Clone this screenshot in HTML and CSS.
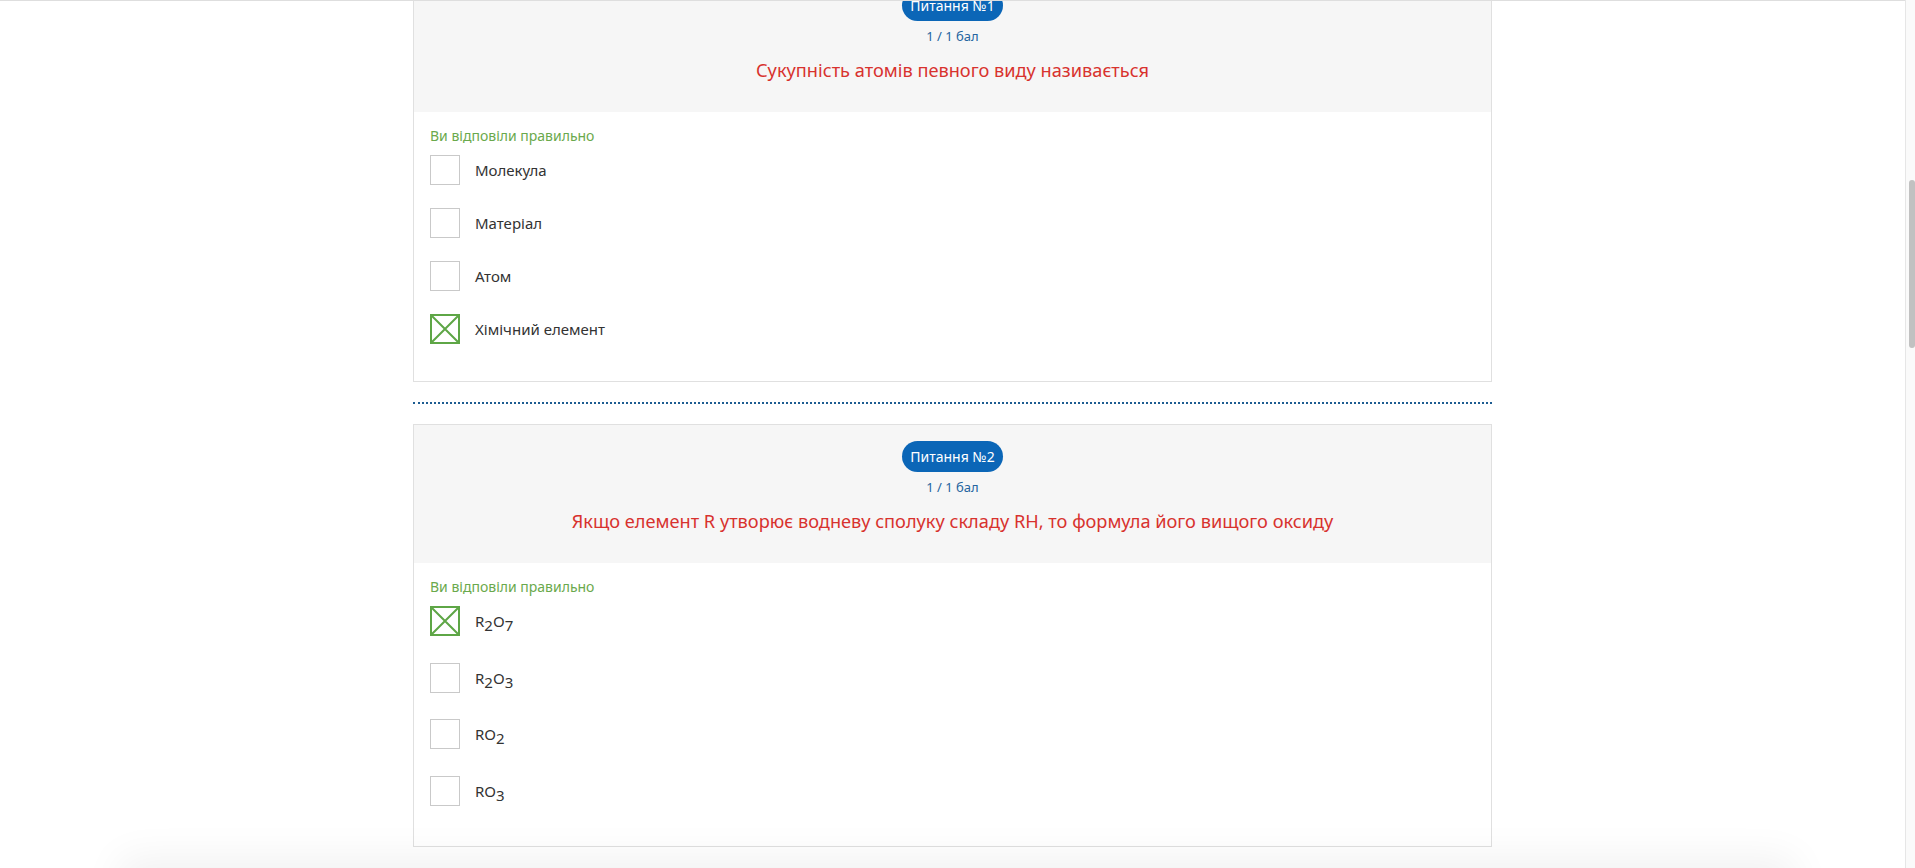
FILE: index.html
```html
<!DOCTYPE html>
<html lang="uk">
<head>
    <meta charset="UTF-8">
    <meta name="viewport" content="width=device-width, initial-scale=1.0">
    <title>Результати тесту</title>
    <link rel="stylesheet" href="styles.css">
</head>
<body>

<div class="topbar"></div>

<div class="page">
    <div class="viewport">
        <main class="quiz">

            <!-- Question 1 -->
            <section class="question">
                <div class="question-head">
                    <span class="badge">Питання №1</span>
                    <div class="score">1 / 1 бал</div>
                    <h2 class="question-title">Сукупність атомів певного виду називається</h2>
                </div>
                <div class="question-body">
                    <p class="result">Ви відповіли правильно</p>
                    <ul class="options">
                        <li class="option"><span class="box"></span><span class="option-text">Молекула</span></li>
                        <li class="option"><span class="box"></span><span class="option-text">Матеріал</span></li>
                        <li class="option"><span class="box"></span><span class="option-text">Атом</span></li>
                        <li class="option checked">
                            <span class="box">
                                <svg viewBox="0 0 26 26"><path d="M0 0L26 26M26 0L0 26"/></svg>
                            </span>
                            <span class="option-text">Хімічний елемент</span>
                        </li>
                    </ul>
                </div>
            </section>

            <hr class="divider">

            <!-- Question 2 -->
            <section class="question">
                <div class="question-head">
                    <span class="badge">Питання №2</span>
                    <div class="score">1 / 1 бал</div>
                    <h2 class="question-title">Якщо елемент R утворює водневу сполуку складу RH, то формула його вищого оксиду</h2>
                </div>
                <div class="question-body">
                    <p class="result">Ви відповіли правильно</p>
                    <ul class="options">
                        <li class="option checked">
                            <span class="box">
                                <svg viewBox="0 0 26 26"><path d="M0 0L26 26M26 0L0 26"/></svg>
                            </span>
                            <span class="option-text">R<sub>2</sub>O<sub>7</sub></span>
                        </li>
                        <li class="option"><span class="box"></span><span class="option-text">R<sub>2</sub>O<sub>3</sub></span></li>
                        <li class="option"><span class="box"></span><span class="option-text">RO<sub>2</sub></span></li>
                        <li class="option"><span class="box"></span><span class="option-text">RO<sub>3</sub></span></li>
                    </ul>
                </div>
            </section>

        </main>
    </div>

    <div class="scrollbar">
        <div class="thumb"></div>
    </div>
</div>

<div class="bottom-panel"></div>

</body>
</html>
```

FILE: styles.css
```css
* {
    margin: 0;
    padding: 0;
    box-sizing: border-box;
}

html, body {
    height: 100%;
    overflow: hidden;
}

body {
    font-family: 'Noto Sans', 'Open Sans', sans-serif;
    background-color: #fff;
    color: #333;
}

/* edge of the sticky site header */
.topbar {
    position: fixed;
    top: 0;
    left: 0;
    right: 10px;
    height: 1px;
    background-color: #dedede;
    z-index: 5;
}

.page {
    display: flex;
    height: 100vh;
}

.viewport {
    flex: 1;
    overflow: hidden;
}

.quiz {
    width: 1079px;
    margin: -27px auto 0;
}

/* ---------- question card ---------- */

.question {
    border: 1px solid #e0e0e0;
    background-color: #fff;
}

.question-head {
    background-color: #f6f6f6;
    padding: 16px 20px 29px;
    text-align: center;
}

.badge {
    display: inline-block;
    height: 31px;
    line-height: 31px;
    padding: 0 8px;
    border-radius: 16px;
    background-color: #0b66b7;
    color: #fff;
    font-size: 14px;
}

.score {
    margin-top: 5px;
    line-height: 20px;
    font-size: 13px;
    color: #2565a0;
}

.question-title {
    margin-top: 11px;
    line-height: 26px;
    font-size: 18.2px;
    font-weight: normal;
    color: #d8322e;
}

.question-body {
    padding: 13px 16px 37px;
}

.result {
    line-height: 22px;
    font-size: 14px;
    color: #6aa94c;
}

.options {
    list-style: none;
    margin-top: 8px;
    display: flex;
    flex-direction: column;
    gap: 23px;
}

.option {
    display: flex;
    align-items: flex-start;
    gap: 15px;
}

.box {
    flex: none;
    width: 30px;
    height: 30px;
    border: 1px solid #c9c9c9;
    background-color: #fff;
}

.option.checked .box {
    border: 2px solid #5ea646;
}

.box svg {
    display: block;
    width: 26px;
    height: 26px;
}

.box svg path {
    stroke: #5ea646;
    stroke-width: 2;
    fill: none;
}

.option-text {
    line-height: 30px;
    font-size: 15px;
    color: #333;
}

.option-text sub {
    font-size: 1em;
    line-height: 30px;
    vertical-align: -3.5px;
}

.divider {
    border: none;
    border-top: 2px dotted #1d5c91;
    margin: 20px 0;
}

/* ---------- page chrome ---------- */

.scrollbar {
    flex: none;
    width: 10px;
    border-left: 1px solid #e6e6e6;
    background-color: #fafafa;
    padding-left: 3px;
}

.thumb {
    margin-top: 180px;
    height: 168px;
    border-radius: 3px;
    background-color: #c1c1c1;
}

.bottom-panel {
    position: fixed;
    left: 130px;
    right: 130px;
    bottom: -60px;
    height: 60px;
    background-color: #fff;
    box-shadow: 0 0 40px 10px rgba(0, 0, 0, 0.06);
}
```
